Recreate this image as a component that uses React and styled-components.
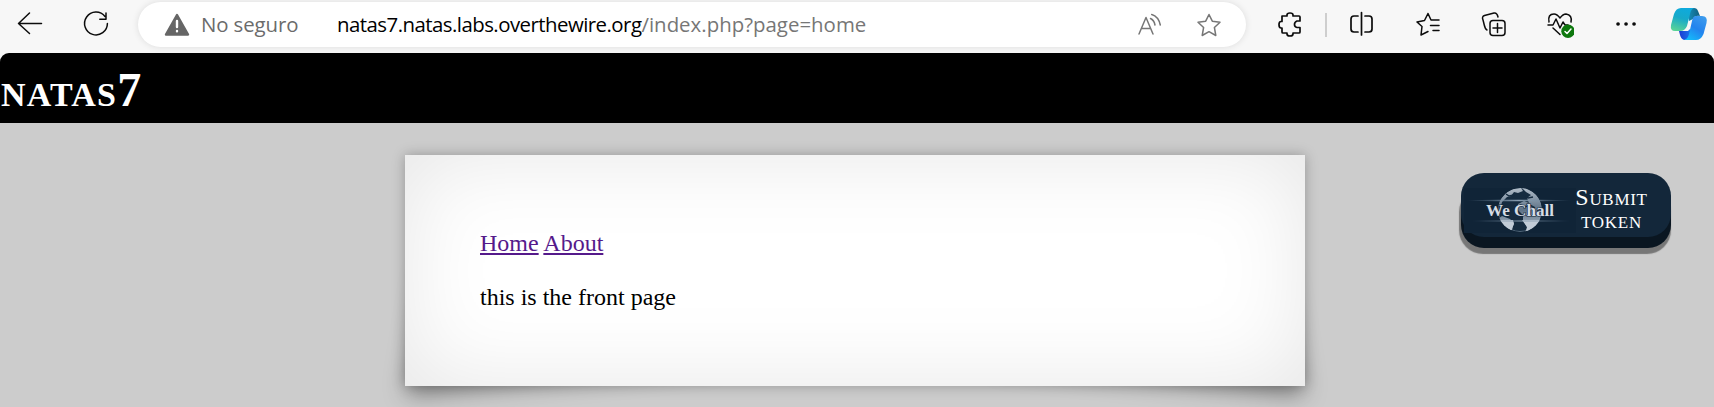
import React from "react";
import styled, { createGlobalStyle, css } from "styled-components";

const GlobalStyle = createGlobalStyle`
  * { box-sizing: border-box; }
  html, body { margin: 0; height: 100%; overflow: hidden; }
  body { background: #cccccc; font-family: "Liberation Serif", serif; }
`;

const Window = styled.div`
  height: 407px;
  background: #f7f7f7;
  overflow: hidden;
`;

const Toolbar = styled.header`
  display: flex;
  align-items: flex-start;
  height: 53px;
  color: #0c0c0c;
  font-family: "Open Sans", sans-serif;
`;

const IconButton = styled.button`
  flex: none;
  display: block;
  width: ${(p) => p.$width || 28}px;
  height: ${(p) => p.$height || 28}px;
  margin: ${(p) => p.$top ?? 10}px 0 0 ${(p) => p.$gap || 0}px;
  padding: 0;
  border: 0;
  background: none;
  color: inherit;
`;

const Glyph = styled.svg`
  display: block;
  width: 100%;
  height: 100%;
  fill: none;
  stroke: currentColor;
  stroke-width: ${(p) => p.$weight ?? 1.5};
  stroke-linecap: round;
  stroke-linejoin: round;
`;

const AddressBar = styled.div`
  flex: none;
  display: flex;
  align-items: center;
  width: 1108px;
  height: 45px;
  margin: 2px 0 0 28px;
  border-radius: 23px;
  background: #fff;
  box-shadow: 0 0 7px rgba(0, 0, 0, 0.11);
  color: #767676;
  font-size: 20px;
  white-space: nowrap;
  ${IconButton} { margin-top: 0; }
`;

const Security = styled.span`
  width: 136px;
  margin: -2px 0 0 10px;
  font-size: 20.4px;
  letter-spacing: -0.1px;
  color: #6b6b6b;
`;

const Url = styled.span`
  width: 799px;
  margin-top: -2px;
  font-size: 20.4px;
  letter-spacing: 0.02px;
  b { color: #000; font-weight: 400; letter-spacing: -0.53px; }
`;

const Divider = styled.span`
  width: 2px;
  height: 24px;
  margin: 13px 0 0 20px;
  background: #cecece;
`;

const Page = styled.main`
  height: 354px;
  border-radius: 9px 9px 0 0;
  background: #cccccc;
  overflow: hidden;
`;

const Title = styled.h1`
  height: 70px;
  margin: 0;
  padding: 9px 0 0 1px;
  background: #000;
  color: #fff;
  font-size: 48px;
  line-height: 55px;
  font-variant: small-caps;
  letter-spacing: 1.2px;
`;

const Columns = styled.div`
  display: flex;
  align-items: flex-start;
  padding: 32px 0 0 405px;
`;

const Content = styled.section`
  position: relative;
  z-index: 0;
  width: 900px;
  height: 231px;
  padding: 75px;
  color: #000;
  font-size: 24px;
  line-height: 27px;
  p { margin: 27px 0 0; }
`;

const Sheet = styled.div`
  position: absolute;
  inset: 0;
  z-index: -1;
  background: #fff;
  box-shadow: 0 0 12px rgba(0, 0, 0, 0.27), inset 0 0 90px rgba(0, 0, 0, 0.1);
`;

const Curl = styled.div`
  position: absolute;
  z-index: -2;
  bottom: 18px;
  width: 300px;
  height: 55%;
  box-shadow: 0 12px 24px rgba(0, 0, 0, 0.4);
  ${(p) =>
    p.$right
      ? css`right: 17px; transform: skew(15deg) rotate(6deg);`
      : css`left: 17px; transform: skew(-15deg) rotate(-6deg);`}
`;

const Link = styled.a`
  color: #551a8b;
  text-decoration: underline;
`;

const TokenButton = styled.button`
  display: flex;
  width: 210px;
  height: 64px;
  margin: 18px 0 0 156px;
  padding: 0;
  border: 0;
  border-radius: 23px;
  background: #13273a;
  box-shadow: 0 11px 0 #0a1621, -1px 16px 1px 1px #777;
  color: #fff;
  font: 24px/22.5px "Liberation Serif", serif;
  font-variant: small-caps;
  letter-spacing: 0.7px;
  text-align: center;
`;

const Logo = styled.svg`
  flex: none;
  width: 115px;
  height: 64px;
`;

const LogoText = styled.text`
  font: bold 17px "Liberation Serif", serif;
  letter-spacing: 0;
  fill: #d5dce5;
  stroke: #132638;
  stroke-width: 1.2px;
  paint-order: stroke;
`;

const TokenLabel = styled.span`
  width: 73px;
  margin-left: -1px;
  padding-top: 13px;
`;

function Star() {
  return <path d="M14 3.5 17.3 10.2 25 11.2 19.4 16.5 20.8 24.5 14 20.7 7.2 24.5 8.6 16.5 3 11.2 10.7 10.2Z" />;
}

function WeChallLogo() {
  return (
    <Logo viewBox="0 0 115 64">
      <defs>
        <linearGradient id="globe" x2="0" y2="1">
          <stop stopColor="#b5c0cb" /><stop offset=".5" stopColor="#5d7287" /><stop offset="1" stopColor="#c2ccd7" />
        </linearGradient>
        <linearGradient id="flare">
          <stop stopColor="#58718a" stopOpacity="0" /><stop offset=".5" stopColor="#8ba0b3" /><stop offset="1" stopColor="#58718a" stopOpacity="0" />
        </linearGradient>
        <clipPath id="disc"><circle cx="59" cy="37" r="22" /></clipPath>
      </defs>
      <rect x="3" y="15" width="116" height="45" fill="#102437" />
      <g clipPath="url(#disc)">
        <circle cx="59" cy="37" r="21.5" fill="#162c40" stroke="#53687b" />
        <path fill="url(#globe)" d="M37 33 39 27 45 20 52 16 60 15 62 18 57 20 53 19 50 23 46 24 41 29 40 33ZM60 14 68 16 76 22 80 30 81 40 78 50 71 57 64 60 66 54 62 47 62 42 57 37 57 31 63 28 68 30 66 25 70 22 65 19ZM37 46 41 43 49 46 53 50 51 57 47 59 41 53Z" />
        <path fill="#c2ccd7" d="M38 47H52L53 51 50 57 45 57ZM61 47H80L72 58 66 59 66 54Z" />
        <path fill="none" stroke="#162c40" strokeWidth="1.5" d="M63 22 67 25 72 24M59 32 64 34 69 32 74 35M45 21 48 23 53 22" />
      </g>
      <ellipse cx="58" cy="27.5" rx="53" ry="0.8" fill="url(#flare)" />
      <ellipse cx="60" cy="48" rx="50" ry="0.6" fill="url(#flare)" />
      <LogoText x="25" y="42.5" textLength="68" lengthAdjust="spacingAndGlyphs">We Chall</LogoText>
    </Logo>
  );
}

function CopilotIcon() {
  return (
    <Glyph viewBox="0 0 38 34" $weight="0">
      <defs>
        <linearGradient id="cpLeft" x1=".6" y1="0" x2=".3" y2="1">
          <stop stopColor="#0eaadd" /><stop offset=".45" stopColor="#17a9c9" /><stop offset="1" stopColor="#58d397" />
        </linearGradient>
        <linearGradient id="cpRight" x1=".8" y1="0" x2=".2" y2="1">
          <stop stopColor="#3d9bed" /><stop offset=".5" stopColor="#2383ee" /><stop offset="1" stopColor="#13bdfb" />
        </linearGradient>
        <linearGradient id="cpTop"><stop stopColor="#168eb9" /><stop offset="1" stopColor="#105f80" /></linearGradient>
        <linearGradient id="cpBase"><stop stopColor="#1b39d0" /><stop offset="1" stopColor="#1b71ec" /></linearGradient>
      </defs>
      <path fill="url(#cpTop)" d="M18 1H24Q27 1 28 4L30 9Q25 8 23 12L19 14Z" />
      <path fill="url(#cpBase)" d="M9 24H18L20 22 20 30Q18 33 14 33Q11 32 10 28Z" />
      <path fill="url(#cpLeft)" d="M11 1H24Q21 2 20 7L17 19Q15 24 10 24H5Q0 24 1 18L4 7Q6 1 11 1Z" />
      <path fill="url(#cpRight)" d="M26 9H32Q38 9 36.5 16L33.5 27Q31 33 26 33H14Q18 32 19 27L22 14Q23 9 26 9Z" />
    </Glyph>
  );
}

export default function App() {
  return (
    <>
      <GlobalStyle />
      <Window>
        <Toolbar>
          <IconButton aria-label="Back" $gap={16}>
            <Glyph viewBox="0 0 28 28"><path d="M25.5 13.5H2.5M13.5 3 2.5 13.5 13.5 23.5" /></Glyph>
          </IconButton>
          <IconButton aria-label="Reload" $gap={38}>
            <Glyph viewBox="0 0 28 28"><path d="M23 6.5A11.4 11.4 0 1 0 25.4 13.5M24 3V9.2H17.8" /></Glyph>
          </IconButton>
          <AddressBar>
            <IconButton as="span" $gap={25}>
              <Glyph viewBox="0 0 28 28" $weight="2.4">
                <path d="M14 4 25 23.5H3Z" fill="#666" stroke="#666" />
                <path d="M14 10V16M14 20V20.2" stroke="#fff" />
              </Glyph>
            </IconButton>
            <Security>No seguro</Security>
            <Url><b>natas7.natas.labs.overthewire.org</b>/index.php?page=home</Url>
            <IconButton aria-label="Read aloud">
              <Glyph viewBox="0 0 28 28"><path d="M3 23 10 6.5 17 23M5.3 17.5H14.7M14.5 7.5Q18 9 19 14M15.7 3.5Q22.5 5.5 24.3 14" /></Glyph>
            </IconButton>
            <IconButton aria-label="Favorite" $gap={31}>
              <Glyph viewBox="0 0 28 28"><Star /></Glyph>
            </IconButton>
          </AddressBar>
          <IconButton aria-label="Extensions" $gap={31}>
            <Glyph viewBox="0 0 28 28" $weight="1.7">
              <path d="M5 6H10V5Q10 3 13 3Q16 3 16 5V6H22Q23 6 23 7V11H20Q17.5 12 17.5 14.5Q17.5 17 20 17.5H23V22Q23 23 22 23H16V24Q16 26 13 26Q10 26 10 24V23H6Q5 23 5 22V18H4Q2 18 2 14.5Q2 11.5 4 11.5H5Z" />
            </Glyph>
          </IconButton>
          <Divider />
          <IconButton aria-label="Split screen" $gap={21}>
            <Glyph viewBox="0 0 28 28" $weight="1.7"><path d="M13.5 2.5V25M10 6H6Q3 6 3 9V19Q3 22 6 22H10M17 6H21Q24 6 24 9V19Q24 22 21 22H17" /></Glyph>
          </IconButton>
          <IconButton aria-label="Favorites" $gap={38}>
            <Glyph viewBox="0 0 28 28"><path d="M25 10H18.5L17 10 14 3.5 10.5 10.5 3 12 8 16.5 7 25 14 21.5M16.5 15.5H25M19 20.5H25" /></Glyph>
          </IconButton>
          <IconButton aria-label="Collections" $gap={38}>
            <Glyph viewBox="0 0 28 28"><path d="M7 20C4.5 19 5 17 3 10Q1.5 6.5 4.5 5.5L14 3Q17 2.5 18 7M13 10.5H22Q25 10.5 25 13.5V22.5Q25 25.5 22 25.5H13Q10 25.5 10 22.5V13.5Q10 10.5 13 10.5M17.5 13.5V22.5M13 18H22" /></Glyph>
          </IconButton>
          <IconButton aria-label="Browser essentials" $gap={38}>
            <Glyph viewBox="0 0 28 28">
              <path d="M3 12Q1.5 4 8 4Q11 4 14 8Q17 4 20 4Q26.5 5 25 12M2 15H7L10 9 14 18 17 12 19 15H22M7 18 14 24.5" />
              <circle cx="22" cy="21.2" r="6.7" fill="#0e780e" stroke="none" />
              <path d="m19 21.5 2 2 4-4.5" stroke="#fff" />
            </Glyph>
          </IconButton>
          <IconButton aria-label="More" $gap={39}>
            <Glyph viewBox="0 0 28 28" $weight="3.6"><path d="M5 14H5.1M13 14H13.1M21 14H21.1" /></Glyph>
          </IconButton>
          <IconButton aria-label="Copilot" $gap={29} $width={38} $height={34} $top={7}>
            <CopilotIcon />
          </IconButton>
        </Toolbar>
        <Page>
          <Title>natas7</Title>
          <Columns>
            <Content>
              <Curl /><Curl $right /><Sheet />
              <Link>Home</Link> <Link>About</Link>
              <p>this is the front page</p>
            </Content>
            <TokenButton>
              <WeChallLogo />
              <TokenLabel>Submit token</TokenLabel>
            </TokenButton>
          </Columns>
        </Page>
      </Window>
    </>
  );
}
